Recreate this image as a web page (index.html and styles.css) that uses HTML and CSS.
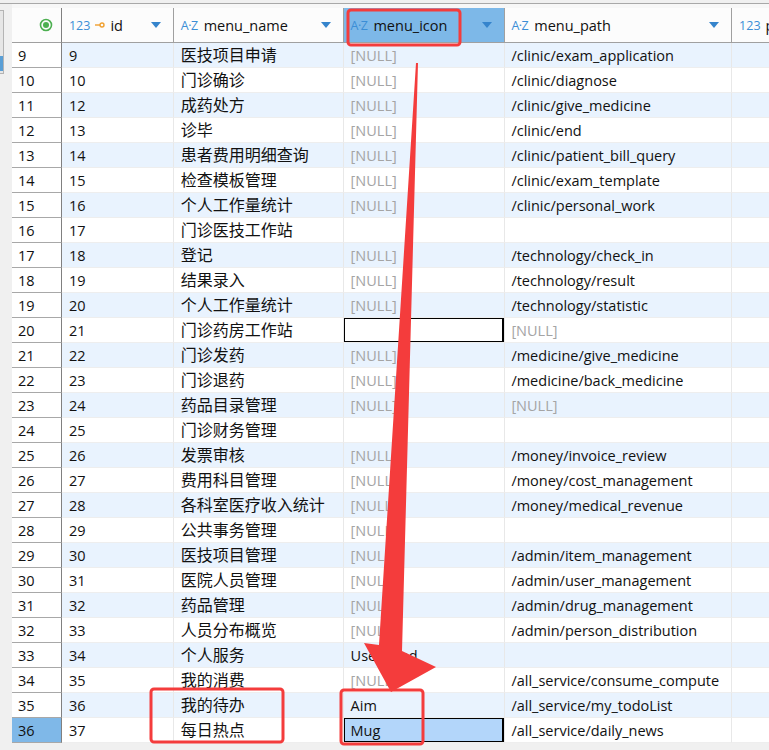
FILE: index.html
```html
<!DOCTYPE html>
<html lang="en">
<head>
    <meta charset="UTF-8">
    <meta name="viewport" content="width=device-width, initial-scale=1.0">
    <title>menu table</title>
    <link rel="stylesheet" href="styles.css">
</head>
<body>
    <div class="topbar"></div>
    <div class="app">
        <div class="side">
            <div class="side-box"><div class="side-thumb"></div></div>
        </div>
        <div class="main">
            <div class="grid" id="grid">
                <div class="head">
                    <div class="hcell c-num">
                        <svg class="pk" width="14" height="14" viewBox="0 0 14 14">
                            <circle cx="7" cy="7" r="5.5" fill="none" stroke="#4caf50" stroke-width="1.6"/>
                            <circle cx="7" cy="7" r="3" fill="#4caf50"/>
                        </svg>
                    </div>
                    <div class="hcell c-id">
                        <span class="t-num">123</span>
                        <svg class="key" width="10" height="6" viewBox="0 0 10 6">
                            <line x1="0" y1="3" x2="5" y2="3" stroke="#f0a030" stroke-width="1.4"/>
                            <circle cx="7" cy="3" r="2" fill="none" stroke="#f0a030" stroke-width="1.4"/>
                        </svg>
                        <span class="h-name">id</span>
                        <span class="drop"></span>
                    </div>
                    <div class="hcell c-name">
                        <span class="t-str">A·Z</span>
                        <span class="h-name">menu_name</span>
                        <span class="drop"></span>
                    </div>
                    <div class="hcell c-icon active">
                        <span class="t-str">A·Z</span>
                        <span class="h-name">menu_icon</span>
                        <span class="drop"></span>
                    </div>
                    <div class="hcell c-path">
                        <span class="t-str">A·Z</span>
                        <span class="h-name">menu_path</span>
                        <span class="drop"></span>
                    </div>
                    <div class="hcell c-more">
                        <span class="t-num">123</span>
                        <span class="h-name">p</span>
                    </div>
                </div>
            </div>
        </div>
    </div>

    <svg class="marks" width="769" height="750" viewBox="0 0 769 750">
        <rect x="348" y="10" width="112" height="35" rx="3" fill="none" stroke="#f43c3c" stroke-width="3"/>
        <rect x="151" y="689" width="132" height="53" rx="3" fill="none" stroke="#f43c3c" stroke-width="3"/>
        <rect x="341" y="690" width="82" height="54" rx="3" fill="none" stroke="#f43c3c" stroke-width="3"/>
        <polygon points="416,63 418,63 402,651 436,667 391,692 364,643 379,645" fill="#f43c3c"/>
    </svg>

    <script>
        const rows = [
            [9, '医技项目申请', null, '/clinic/exam_application'],
            [10, '门诊确诊', null, '/clinic/diagnose'],
            [12, '成药处方', null, '/clinic/give_medicine'],
            [13, '诊毕', null, '/clinic/end'],
            [14, '患者费用明细查询', null, '/clinic/patient_bill_query'],
            [15, '检查模板管理', null, '/clinic/exam_template'],
            [16, '个人工作量统计', null, '/clinic/personal_work'],
            [17, '门诊医技工作站', '', ''],
            [18, '登记', null, '/technology/check_in'],
            [19, '结果录入', null, '/technology/result'],
            [20, '个人工作量统计', null, '/technology/statistic'],
            [21, '门诊药房工作站', '', null],
            [22, '门诊发药', null, '/medicine/give_medicine'],
            [23, '门诊退药', null, '/medicine/back_medicine'],
            [24, '药品目录管理', null, null],
            [25, '门诊财务管理', '', ''],
            [26, '发票审核', null, '/money/invoice_review'],
            [27, '费用科目管理', null, '/money/cost_management'],
            [28, '各科室医疗收入统计', null, '/money/medical_revenue'],
            [29, '公共事务管理', null, ''],
            [30, '医技项目管理', null, '/admin/item_management'],
            [31, '医院人员管理', null, '/admin/user_management'],
            [32, '药品管理', null, '/admin/drug_management'],
            [33, '人员分布概览', null, '/admin/person_distribution'],
            [34, '个人服务', 'UserFilled', ''],
            [35, '我的消费', null, '/all_service/consume_compute'],
            [36, '我的待办', 'Aim', '/all_service/my_todoList'],
            [37, '每日热点', 'Mug', '/all_service/daily_news']
        ];

        const grid = document.getElementById('grid');

        const cell = (cls, value) => {
            const div = document.createElement('div');
            div.className = 'cell ' + cls;
            if (value === null) {
                div.innerHTML = '<span class="null">[NULL]</span>';
            } else {
                div.textContent = value;
            }
            return div;
        };

        rows.forEach((r, i) => {
            const row = document.createElement('div');
            row.className = 'row' + (i % 2 === 0 ? ' alt' : '');
            const num = cell('c-num', String(i + 9));
            const icon = cell('c-icon', r[2]);
            if (i === 11) icon.classList.add('edit');
            if (i === rows.length - 1) {
                num.classList.add('cur');
                icon.classList.add('sel');
            }
            row.append(num, cell('c-id', String(r[0])), cell('c-name', r[1]), icon, cell('c-path', r[3]), cell('c-more', ''));
            grid.appendChild(row);
        });
    </script>
</body>
</html>
```

FILE: styles.css
```css
body {
    margin: 0;
    width: 769px;
    height: 750px;
    overflow: hidden;
    background: #f0f0f0;
    font-family: 'Open Sans', 'Noto Sans CJK SC', sans-serif;
    font-size: 14.5px;
    color: #111;
    position: relative;
}

.topbar {
    height: 3px;
    background: #f0f0f0;
    border-bottom: 1px solid #a8a8a8;
}

.app {
    display: flex;
}

.side {
    width: 12px;
    flex: none;
}

.side-box {
    margin-top: 6px;
    width: 3px;
    height: 62px;
    background: #e6e6e6;
    border: 1px solid #b4b4b4;
    border-left: none;
}

.side-thumb {
    margin-top: 45px;
    height: 15px;
    background: #5a9fd6;
}

.main {
    flex: 1;
    padding-top: 4px;
    background: #f7f7f7;
    overflow: hidden;
}

.grid {
    width: 800px;
}

.head {
    display: flex;
    height: 35px;
}

.hcell {
    box-sizing: border-box;
    height: 35px;
    display: flex;
    align-items: center;
    padding: 0 12px 0 7px;
    background: #fcfcfc;
    border-right: 1px solid #a0a0a0;
    border-bottom: 1px solid #a0a0a0;
    white-space: nowrap;
    overflow: hidden;
}

.hcell.active {
    background: #7db8e8;
}

.hcell.c-num {
    justify-content: flex-end;
    padding-right: 8px;
    border-right-color: #808080;
}

.t-num,
.t-str {
    color: #3b8ed6;
    font-size: 12.5px;
    margin-right: 5px;
}

.t-str {
    letter-spacing: -0.5px;
    margin-right: 6px;
}

.key {
    margin-right: 5px;
}

.h-name {
    font-size: 14.5px;
}

.drop {
    margin-left: auto;
    width: 0;
    height: 0;
    border-left: 5px solid transparent;
    border-right: 5px solid transparent;
    border-top: 6px solid #3584cc;
}

.row {
    display: flex;
    height: 25px;
}

.cell {
    box-sizing: border-box;
    height: 25px;
    line-height: 25px;
    padding-left: 7px;
    background: #fff;
    border-right: 1px solid #e8e8e8;
    border-bottom: 1px solid #eeeeee;
    white-space: nowrap;
    overflow: hidden;
}

.row.alt .cell {
    background: #e9f3fe;
}

.c-num { width: 50px; }
.c-id { width: 112px; }
.c-name { width: 170px; }
.c-icon { width: 162px; }
.c-path { width: 227px; padding-left: 6px; }
.c-more { width: 80px; }

.cell.c-name {
    font-size: 16px;
}

.row .cell.c-num {
    background: #fff;
    padding-left: 6px;
    border-right: 1px solid #808080;
    border-bottom: 1px solid #a8a8a8;
}

.row .cell.c-num.cur {
    background: #7fb8e8;
}

.null {
    color: #a4a4a4;
}

.cell.edit {
    box-shadow: inset 1px 1px 0 #000, inset -2px -1px 0 #000;
}

.row .cell.sel {
    background: #b3d6fa;
    box-shadow: inset 1px 1px 0 #000, inset -2px -1px 0 #000;
}

.marks {
    position: absolute;
    top: 0;
    left: 0;
    pointer-events: none;
}
```
